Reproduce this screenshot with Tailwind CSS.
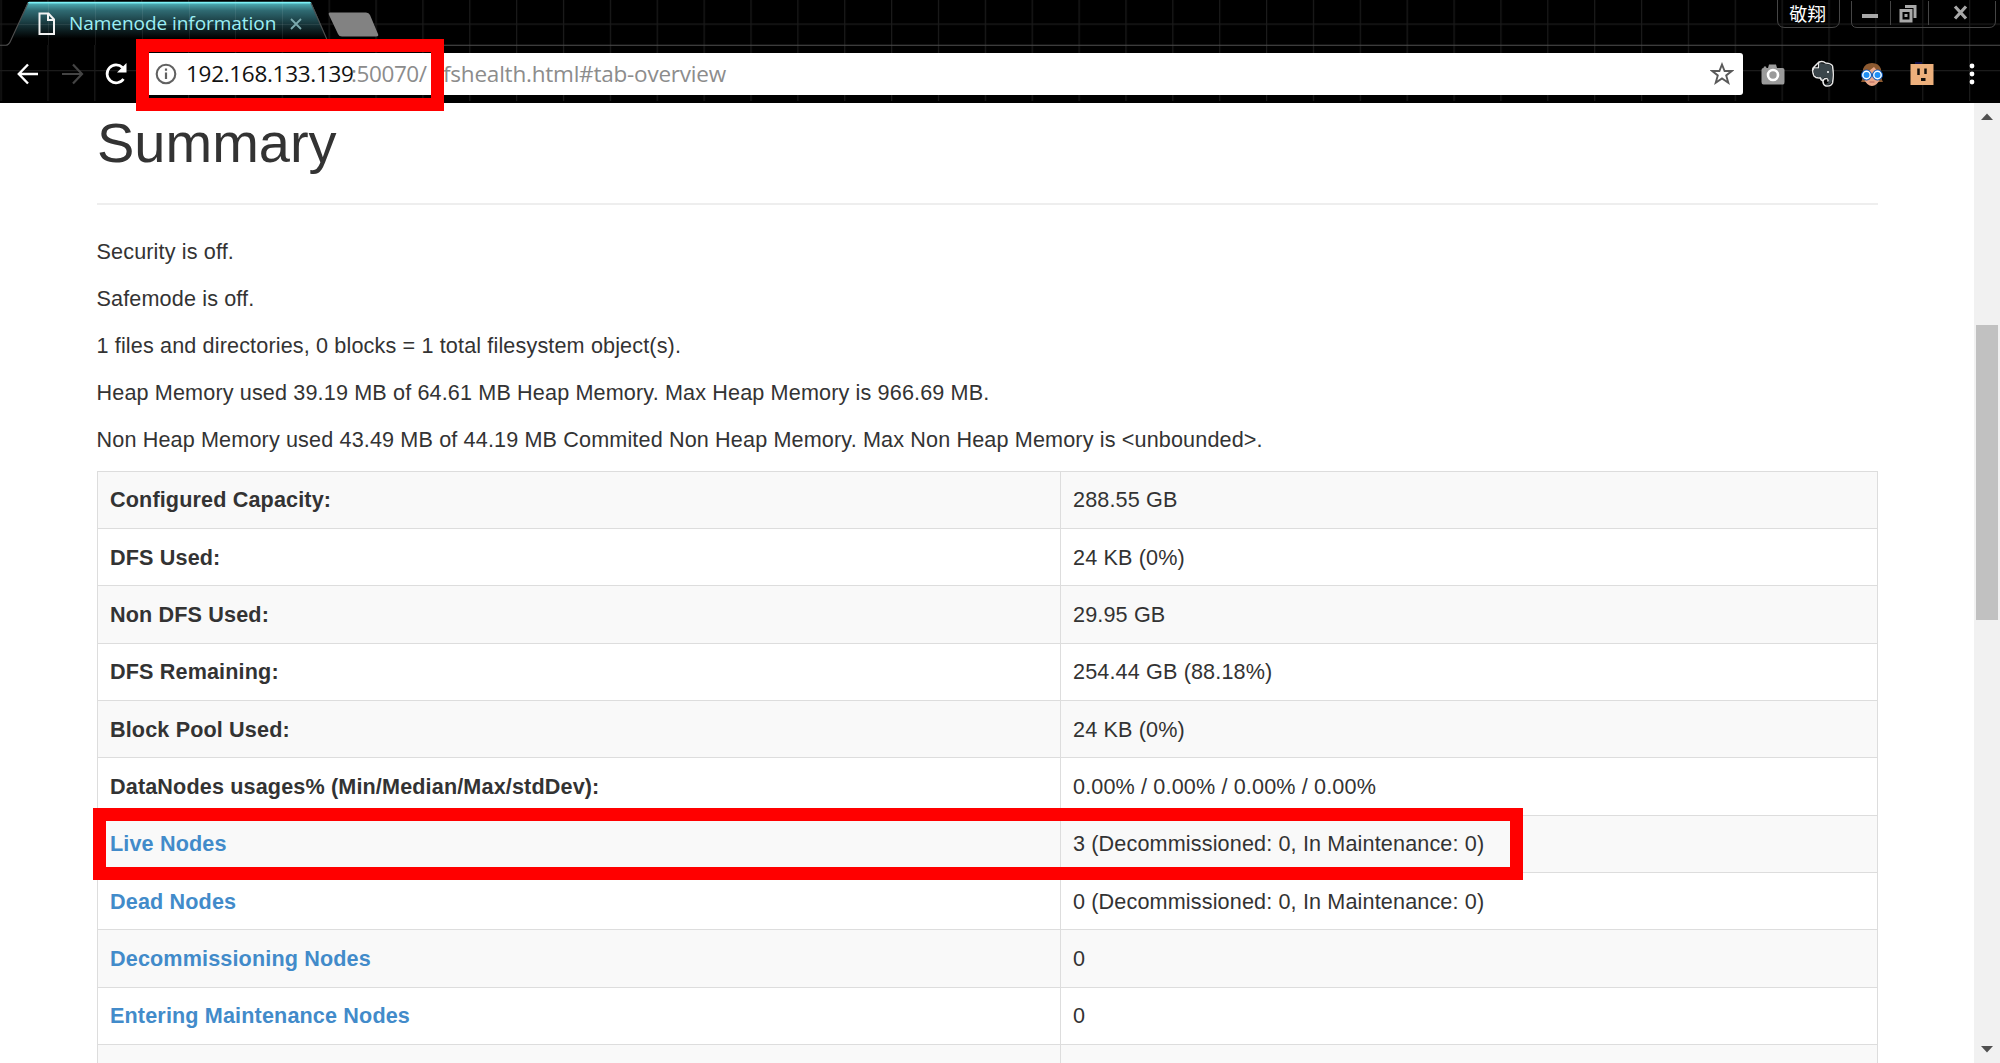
<!DOCTYPE html>
<html lang="en">
<head>
<meta charset="utf-8">
<title>Namenode information</title>
<script src="https://cdn.jsdelivr.net/npm/@tailwindcss/browser@4"></script>
</head>
<body class="h-[1063px] w-[2000px] overflow-hidden bg-white">
<div class="relative flex h-full flex-col">
  <header class="relative h-[103px] shrink-0 bg-black font-['Open_Sans','Noto_Sans',sans-serif]">
    <!-- grid theme, tab outline and window frame -->
    <svg class="absolute inset-0" width="2000" height="103" viewBox="0 0 2000 103">
      <defs>
        <pattern id="grid" x="0.5" y="23.5" width="46.87" height="46.5" patternUnits="userSpaceOnUse">
          <path d="M.6 0V46.5M0 .7H46.87" stroke="#1b1b1b" stroke-width="1.2" fill="none"/>
        </pattern>
        <linearGradient id="tab" x1="0" y1="0" x2="0" y2="1">
          <stop offset="0" stop-color="#6fe3ec"/><stop offset=".06" stop-color="#48a0a8"/><stop offset=".2" stop-color="#2f6a72"/><stop offset=".5" stop-color="#18383d"/><stop offset=".85" stop-color="#000"/>
        </linearGradient>
      </defs>
      <rect width="2000" height="101" fill="url(#grid)"/>
      <path d="M28 2H311L330 45H8Q10 44 12 39Z" fill="url(#tab)"/>
      <path d="M48.500 3V45M95.500 3V45M142.500 3V45M189.500 3V45M235.500 3V45M282.500 3V45M18 24.500H320" stroke="#fff" stroke-opacity=".08"/>
      <path d="M29 2.5H310" stroke="#7df0f5" stroke-width="1.5"/>
      <path d="M0 45.3H6Q9 45 11 40L28 3M311 3L328 42Q330 45.3 334 45.3H2000" fill="none" stroke="#505050" stroke-width="1.1"/>
      <path d="M330 12.5H366Q369 12.500 370 15L378 34Q379 36.500 376 36.500H342Q339 36.500 338 34L329 15Q328 12.500 330 12.500Z" fill="#828282"/>
      <path d="M1777.500 0V20Q1777.500 27.500 1785 27.500H1832Q1839.500 27.500 1839.500 20V0M1851.500 1V22Q1851.500 27.500 1857 27.500H1989Q1995.500 27.500 1995.500 21V1M1890.500 1V25M1928.500 1V25" fill="none" stroke="#454545"/>
    </svg>
    <div class="relative flex h-[46px] items-start">
      <svg class="mt-3 ml-[38px]" width="18" height="24" viewBox="0 0 18 24" fill="none" stroke="#f2f2f2" stroke-width="2"><path d="M1.500 1.500H10.500L16 7.500V22H1.500ZM10 1.500V8H16"/></svg>
      <span class="mt-[9px] ml-[13px] w-[207px] text-[19px] leading-[28px] tracking-[-0.05px] whitespace-nowrap text-[#9ceef4]">Namenode information</span>
      <svg class="mt-[18px] ml-[14px]" width="12" height="12" viewBox="0 0 12 12" stroke="#7ba9ad" stroke-width="1.800"><path d="M1 1L11 11M11 1L1 11"/></svg>
      <span class="ml-[1487px] font-['Noto_Sans_CJK_TC',sans-serif] text-[18.5px] leading-[26px] text-white">敬翔</span>
      <svg class="mt-1 ml-9" width="108" height="22" viewBox="0 0 108 22" fill="none" stroke="#a8a8a8"><path d="M0 12H16" stroke-width="4"/><path d="M39 6.500H49V17H39ZM43 2.500H53V14" stroke-width="3"/><rect x="42.500" y="10" width="3" height="3" fill="#a8a8a8" stroke="none"/><path d="M93 2.500L104 14.500M104 2.500L93 14.500" stroke-width="3.200"/></svg>
    </div>
    <div class="relative flex h-[56px] items-center">
      <svg class="ml-[17px]" width="22" height="22" viewBox="0 0 22 22" fill="none" stroke="#fff" stroke-width="2.400"><path d="M21 11H2M11 1.500L1.800 11L11 20.500"/></svg>
      <svg class="ml-[23px]" width="22" height="22" viewBox="0 0 22 22" fill="none" stroke="#444" stroke-width="2.200"><path d="M0 11H19.500M11 1.500L20 11L11 20.500"/></svg>
      <svg class="ml-[20px]" width="24" height="24" viewBox="0 0 24 24"><path d="M19.500 17A9 9 0 1 1 18.500 5.500" fill="none" stroke="#fff" stroke-width="2.700"/><path d="M22.500 1V10.500H13Z" fill="#fff"/></svg>
      <div class="ml-[14px] flex h-[42px] w-[1601px] items-center rounded-[3px] bg-white">
        <svg class="ml-[13px]" width="22" height="22" viewBox="0 0 22 22"><circle cx="11" cy="11" r="9.300" fill="none" stroke="#616161" stroke-width="2.100"/><path d="M11 9.500V16M11 5.500V7.800" stroke="#616161" stroke-width="2.200"/></svg>
        <span class="ml-[9px] flex w-[600px] text-[22.5px] leading-[30px] font-normal whitespace-nowrap text-[#8c8c8c]"><span class="w-[165px] tracking-[-0.3px] text-[#111]">192.168.133.139</span><span class="w-[80px] tracking-[-0.4px]">:50070/</span><span class="w-[12px] text-[20px] tracking-[-1px]">d</span><span class="tracking-[-0.22px]">fshealth.html#tab-overview</span></span>
        <svg class="mr-[9px] ml-auto" width="24" height="24" viewBox="0 0 24 24" fill="none" stroke="#5a5a5a" stroke-width="1.900"><path d="M12 2.500L14.600 9H21.800L16.200 13.400L18.300 20.800L12 16.500L5.700 20.800L7.800 13.400L2.200 9H9.400Z"/></svg>
      </div>
      <svg class="ml-[18px]" width="24" height="24" viewBox="0 0 24 24"><path d="M.5 8Q.5 6 2.500 6L3 4.500H5L5.500 6H7L8 2.500H15L16 6H21.500Q23.500 6 23.500 8V20Q23.500 22.500 22 22.500H2.500Q.5 22.500 .5 20Z" fill="#9b9b9b"/><circle cx="12" cy="13" r="5" fill="#9b9b9b" stroke="#fff" stroke-width="2.600"/></svg>
      <svg class="ml-[26px]" width="24" height="28" viewBox="0 0 24 28"><path d="M2 8L8 2Q12 .5 14.500 3Q20.500 3.500 21.500 6Q23 15 21.500 23Q20 26.500 15 26Q12 25 12 21.500Q12.500 18 16 18.500Q18 20 16.500 21.500M12 21Q9 20 9.500 18Q5 18.500 3 16Q1 11.500 2 8ZM2 8H7.500L8 2" fill="none" stroke="#e8e8e8" stroke-width="1.500" stroke-linejoin="round"/><path d="M3 8.500H8.200V3L14 3.800Q20 4.300 20.700 7Q22 15 20.700 22Q19 25 15.500 25L13.500 24Q18 24 18 20Q17 16.500 13 17.800L11 20Q10.500 18 10 17.300Q5.500 17.700 3.800 15.500Q2 12 3 8.500Z" fill="#3b464b"/><circle cx="17" cy="12" r="1" fill="#fff"/></svg>
      <svg class="ml-[25px]" width="24" height="26" viewBox="0 0 24 26"><path d="M1 21Q3 19 3 8Q5 2 12 2Q19 2 21 8Q21 19 23 21Z" fill="#8d5a31"/><path d="M4 12Q10 10 14 6Q17 10 20 12V18Q17 25 12 25Q7 25 4 18Z" fill="#eba98a"/><path d="M9 14H15" stroke="#fff" stroke-width="2"/><g fill="#1e8ff5" stroke="#0c50b0" stroke-width="1"><circle cx="6.500" cy="14" r="5"/><circle cx="17.500" cy="14" r="5"/></g><g fill="none" stroke="#fff" stroke-width="1.400"><circle cx="6.500" cy="14" r="3.700"/><circle cx="17.500" cy="14" r="3.700"/></g><path d="M9.500 21H14.500" stroke="#b5645c"/></svg>
      <svg class="ml-[26px]" width="24" height="24" viewBox="0 0 24 24"><path d="M5 0H12V3H5Z" fill="#10104a"/><rect x=".5" y="2" width="23" height="21" fill="#edb07c"/><path d="M8.500 6.500V13M15.500 6.500V12" stroke="#15100c" stroke-width="2.500"/><path d="M11 17.500H15.500" stroke="#15100c" stroke-width="3"/></svg>
      <svg class="ml-[35px]" width="6" height="22" viewBox="0 0 6 22" fill="#fff"><circle cx="3" cy="3" r="2.400"/><circle cx="3" cy="11" r="2.400"/><circle cx="3" cy="19" r="2.400"/></svg>
    </div>
  </header>
  <main class="flex min-h-0 flex-1 font-['Liberation_Sans',Arial,sans-serif] text-[21.6px] leading-[31px] tracking-[0.14px] text-[#333]">
    <div class="flex-1 overflow-hidden pl-[97px]">
      <div class="w-[1781px]">
        <h1 class="flex h-[102px] items-start border-b-2 border-[#eee] pt-[9px] text-[56px] leading-[62px] tracking-normal"><span>Summary</span></h1>
        <div class="-ml-[0.5px] flex flex-col gap-[15.900px] pt-[31px] whitespace-nowrap">
          <p>Security is off.</p>
          <p>Safemode is off.</p>
          <p>1 files and directories, 0 blocks = 1 total filesystem object(s).</p>
          <p>Heap Memory used 39.19 MB of 64.61 MB Heap Memory. Max Heap Memory is 966.69 MB.</p>
          <p>Non Heap Memory used 43.49 MB of 44.19 MB Commited Non Heap Memory. Max Non Heap Memory is &lt;unbounded&gt;.</p>
        </div>
        <div id="tbl" class="mt-[16px] grid grid-cols-[963px_817px] border-t border-l border-[#ddd]"></div>
      </div>
    </div>
    <div class="flex w-[26px] flex-col items-center bg-[#f1f1f1]">
      <svg class="mt-[10px]" width="12" height="7" viewBox="0 0 12 7"><path d="M0 7L6 .5L12 7Z" fill="#505050"/></svg>
      <div class="mt-[205px] h-[295px] w-[22px] bg-[#c1c1c1]"></div>
      <svg class="mt-auto mb-[10px]" width="12" height="7" viewBox="0 0 12 7"><path d="M0 0H12L6 6.500Z" fill="#505050"/></svg>
    </div>
  </main>
  <div class="absolute top-[39px] left-[136px] h-[72px] w-[308px] border-[13px] border-[#f00]"></div>
  <div class="absolute top-[808px] left-[93px] h-[72px] w-[1430px] border-[13px] border-[#f00]"></div>
</div>
<script>
const rows = [
  ['Configured Capacity:', '288.55 GB'],
  ['DFS Used:', '24 KB (0%)'],
  ['Non DFS Used:', '29.95 GB'],
  ['DFS Remaining:', '254.44 GB (88.18%)'],
  ['Block Pool Used:', '24 KB (0%)'],
  ['DataNodes usages% (Min/Median/Max/stdDev):', '0.00% / 0.00% / 0.00% / 0.00%'],
  ['Live Nodes', '3 (Decommissioned: 0, In Maintenance: 0)'],
  ['Dead Nodes', '0 (Decommissioned: 0, In Maintenance: 0)'],
  ['Decommissioning Nodes', '0'],
  ['Entering Maintenance Nodes', '0'],
  ['', '']
];
document.getElementById('tbl').innerHTML = rows.map(([k, v], i) => {
  const bg = i % 2 ? 'bg-white' : 'bg-[#f9f9f9]';
  const link = i > 5 ? 'text-[#428bca]' : '';
  const cell = 'flex h-[57.330px] items-center border-r border-b border-[#ddd] pl-3 whitespace-nowrap';
  return `<div class="${cell} ${bg} ${link} font-bold"><span>${k}</span></div><div class="${cell} ${bg}"><span>${v}</span></div>`;
}).join('');
</script>
</body>
</html>
